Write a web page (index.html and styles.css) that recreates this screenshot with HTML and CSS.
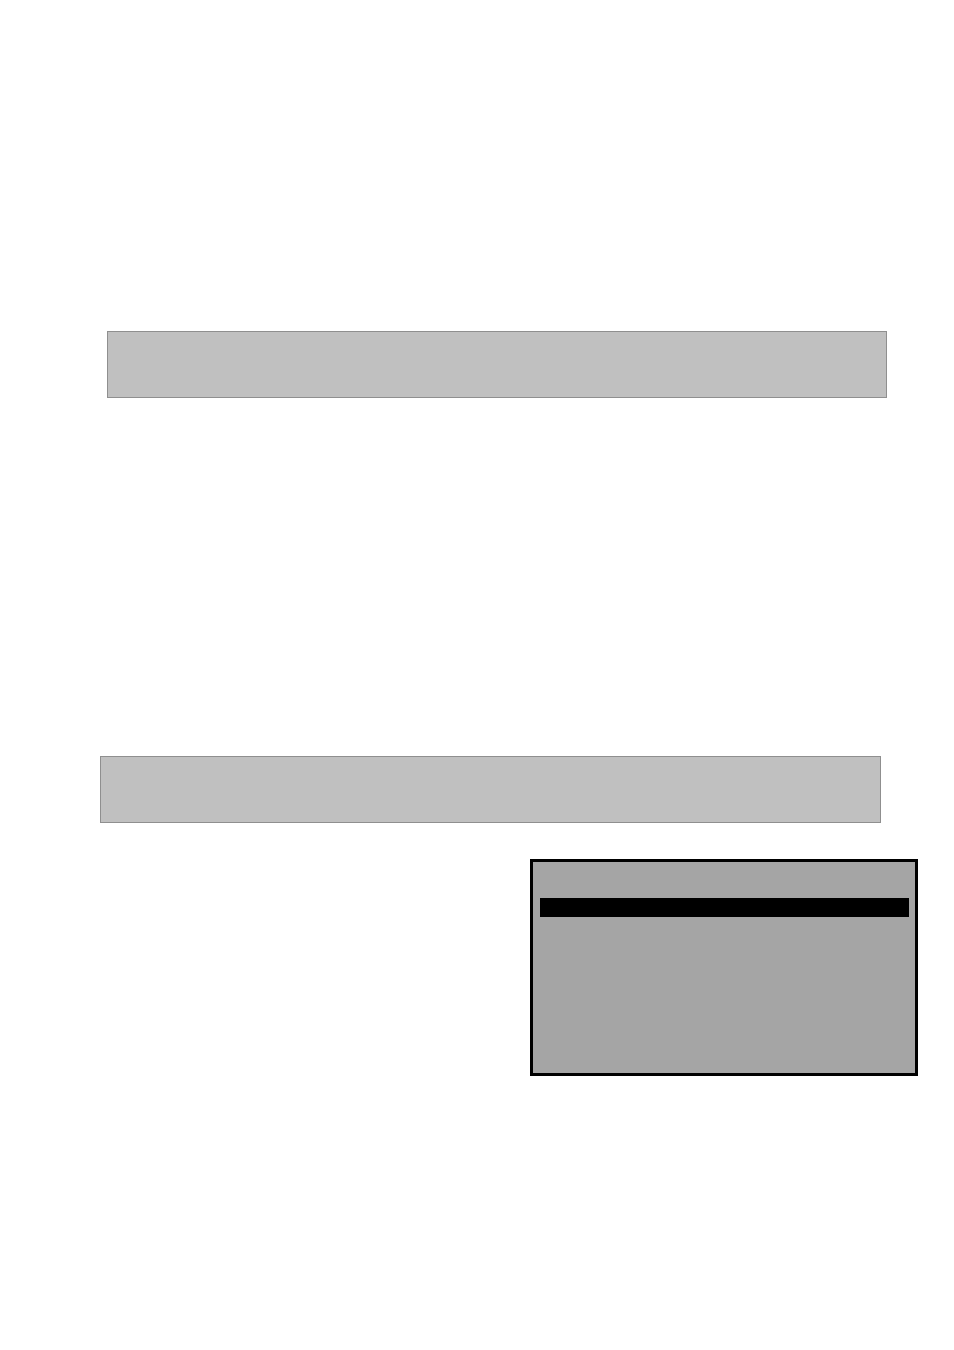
FILE: index.html
```html
<!DOCTYPE html>
<html lang="en">
<head>
<meta charset="utf-8">
<title>Page</title>
<link rel="stylesheet" href="styles.css">
</head>
<body>
<main class="page">
  <div class="band band-one"></div>
  <div class="band band-two"></div>
  <div class="row">
    <div class="screen">
      <div class="screen-selected"></div>
    </div>
  </div>
</main>
</body>
</html>
```

FILE: styles.css
```css
html, body {
  margin: 0;
  padding: 0;
  background: #ffffff;
  font-family: "Liberation Sans", Arial, sans-serif;
}

.page {
  width: 954px;
  height: 1350px;
  display: flex;
  flex-direction: column;
  align-items: flex-start;
  box-sizing: border-box;
  padding-top: 331px;
}

.band {
  box-sizing: border-box;
  height: 67px;
  background: #c0c0c0;
  border: 1px solid #8f8f8f;
}

.band-one {
  width: 780px;
  margin-left: 107px;
}

.band-two {
  width: 781px;
  margin-left: 100px;
  margin-top: 358px;
}

.row {
  display: flex;
  justify-content: flex-end;
  width: 100%;
  margin-top: 36px;
  padding-right: 36px;
  box-sizing: border-box;
}

.screen {
  box-sizing: border-box;
  width: 388px;
  height: 217px;
  background: #a5a5a5;
  border: 3px solid #000000;
  padding: 36px 6px 0 7px;
}

.screen-selected {
  height: 19px;
  background: #000000;
}
```
